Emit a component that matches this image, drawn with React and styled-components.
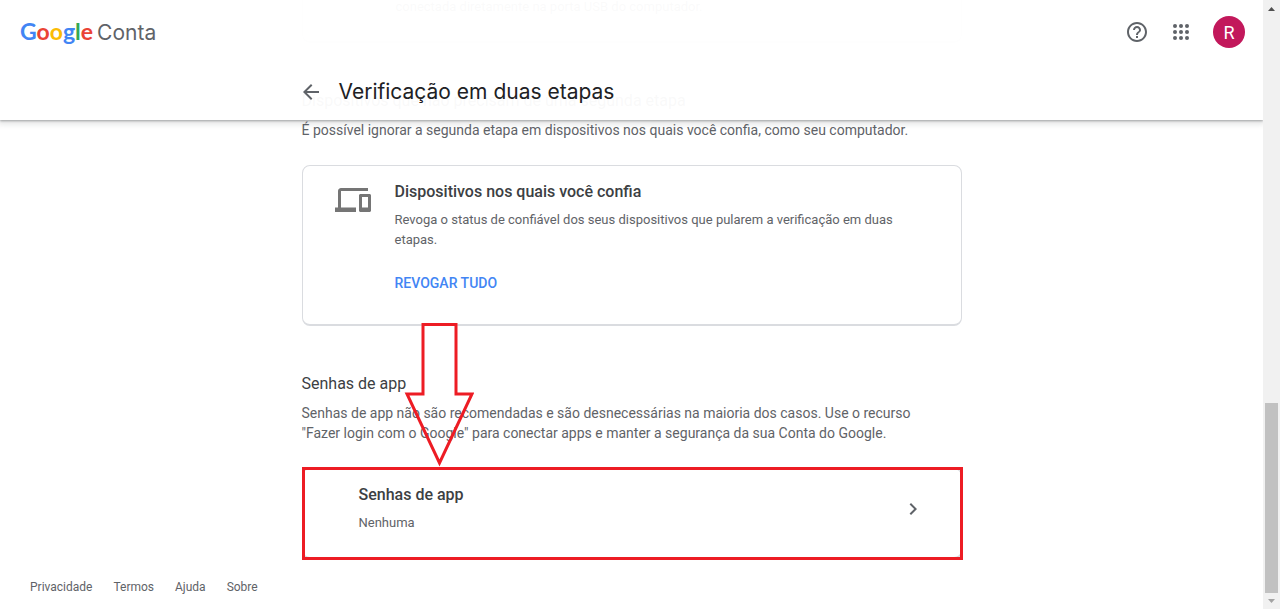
import React from "react";
import styled, { createGlobalStyle } from "styled-components";
import { MdArrowBack, MdChevronRight, MdDevices, MdHelpOutline } from "react-icons/md";

const colors = {
	text: "#3c4043",
	title: "#202124",
	grey: "#5f6368",
	border: "#dadce0",
	link: "#4285f4",
	avatar: "#c2185b",
	red: "#ed1c24",
};

const GlobalStyle = createGlobalStyle`
	* {
		box-sizing: border-box;
	}
	body {
		margin: 0;
		background: #fff;
		font-family: Roboto, "Liberation Sans", sans-serif;
		color: ${colors.text};
	}
`;
const Window = styled.div`
	display: flex;
	height: 100vh;
	overflow: hidden;
`;
const Pane = styled.div`
	position: relative;
	display: flex;
	flex: 1;
	flex-direction: column;
	justify-content: space-between;
	min-width: 0;
	overflow: hidden;
`;
const Column = styled.div`
	width: 100%;
	max-width: 660px;
	margin: 0 auto;
`;
const Header = styled.header`
	position: absolute;
	top: 0;
	left: 0;
	right: 0;
	z-index: 2;
	background: rgba(255, 255, 255, 0.97);
	box-shadow: 0 1px 2px rgba(60, 64, 67, 0.4), 0 2px 6px 2px rgba(60, 64, 67, 0.15);
`;
const TopBar = styled.div`
	display: flex;
	align-items: center;
	justify-content: space-between;
	height: 64px;
	padding: 0 18px 0 20px;
`;
const Brand = styled.a`
	display: flex;
	align-items: baseline;
	gap: 4px;
	color: ${colors.grey};
	font-family: Inter, sans-serif;
	font-size: 21px;
	line-height: 32px;
	text-decoration: none;
`;
const Logo = styled.span`
	font-family: Lato, sans-serif;
	font-size: 23px;
	font-weight: bold;
`;
const Letter = styled.span`
	color: ${(props) => props.color};
`;
const Actions = styled.div`
	display: flex;
	align-items: center;
	gap: 20px;
`;
const IconButton = styled.button`
	display: flex;
	padding: 0;
	border: 0;
	background: none;
	color: ${colors.grey};
	font-size: 24px;
`;
const AppsIcon = styled.svg`
	width: 24px;
	height: 24px;
	fill: currentColor;
`;
const Avatar = styled.button`
	width: 32px;
	height: 32px;
	padding: 0;
	border: 0;
	border-radius: 50%;
	background: ${colors.avatar};
	color: #fff;
	font-family: inherit;
	font-size: 18px;
`;
const TitleBar = styled(Column)`
	display: flex;
	align-items: center;
	gap: 16px;
	height: 56px;
`;
const BackButton = styled(IconButton)`
	margin-left: -3px;
`;
const PageTitle = styled.h1`
	margin: 0;
	color: ${colors.title};
	font-family: Inter, sans-serif;
	font-size: 21px;
	font-weight: normal;
	line-height: 28px;
`;
const SectionTitle = styled.h2`
	margin: 46px 0 7px;
	font-size: 16px;
	font-weight: normal;
	line-height: 24px;
`;
const SectionText = styled.p`
	max-width: 640px;
	margin: 0 0 25px;
	color: ${colors.grey};
	font-size: 14px;
	line-height: 20px;
`;
const Card = styled.section`
	position: relative;
	display: flex;
	gap: 24px;
	padding: 16px 32px 31px;
	border: 1px solid ${colors.border};
	border-bottom-width: 2px;
	border-radius: 8px;
`;
const CardEnd = styled.div`
	height: 43px;
	padding-left: 93px;
	border: solid ${colors.border};
	border-width: 0 1px 2px;
	border-radius: 0 0 8px 8px;
	color: ${colors.grey};
	font-size: 13px;
	line-height: 14px;
`;
const DevicesIcon = styled(MdDevices)`
	flex: none;
	color: #757575;
	font-size: 36px;
`;
const CardTitle = styled.h3`
	margin: 0 0 8px;
	color: ${colors.text};
	font-size: 16px;
	font-weight: 500;
	line-height: 20px;
`;
const CardText = styled.p`
	margin: 0;
	color: ${colors.grey};
	font-size: 13px;
	line-height: 20px;
`;
const TextButton = styled.button`
	margin-top: 23px;
	padding: 0;
	border: 0;
	background: none;
	color: ${colors.link};
	font-family: inherit;
	font-size: 14px;
	font-weight: 500;
	line-height: 20px;
	text-transform: uppercase;
`;
const LinkCard = styled(Card)`
	align-items: center;
	justify-content: space-between;
	padding: 16px 36px 24px 56px;
	color: inherit;
	text-decoration: none;
`;
const Chevron = styled(MdChevronRight)`
	flex: none;
	color: ${colors.grey};
	font-size: 24px;
`;
const Outline = styled.span`
	position: absolute;
	inset: -2px -2px -3px -1px;
	border: 3px solid ${colors.red};
`;
const Arrow = styled.svg`
	position: absolute;
	left: 101px;
	bottom: 100%;
	width: 70px;
	height: 148px;
	fill: none;
	stroke: ${colors.red};
	stroke-width: 3;
`;
const Footer = styled.footer`
	display: flex;
	gap: 21px;
	padding: 0 30px 12px;
`;
const FooterLink = styled.a`
	color: ${colors.grey};
	font-size: 12px;
	line-height: 20px;
	text-decoration: none;
`;
const ScrollTrack = styled.div`
	display: flex;
	flex-direction: column;
	flex: none;
	width: 17px;
	padding: 0 2px;
	background: #f1f1f1;
`;
const ScrollArrow = styled.svg`
	width: 13px;
	height: 16px;
	fill: ${(props) => props.color};
`;
const ScrollSpace = styled.div`
	flex: 387;
`;
const ScrollThumb = styled.div`
	flex: 190;
	background: #c1c1c1;
`;

const App = () => {
	return (
		<Window>
			<GlobalStyle />
			<Pane>
				<Header>
					<TopBar>
						<Brand href="#">
							<Logo>
								<Letter color="#4285f4">G</Letter>
								<Letter color="#ea4335">o</Letter>
								<Letter color="#fbbc04">o</Letter>
								<Letter color="#4285f4">g</Letter>
								<Letter color="#34a853">l</Letter>
								<Letter color="#ea4335">e</Letter>
							</Logo>
							<span>Conta</span>
						</Brand>
						<Actions>
							<IconButton aria-label="Ajuda">
								<MdHelpOutline />
							</IconButton>
							<IconButton aria-label="Google Apps">
								<AppsIcon viewBox="0 0 24 24">
									{[6, 12, 18].map((y) =>
										[6, 12, 18].map((x) => <circle key={`${x}-${y}`} cx={x} cy={y} r="2" />)
									)}
								</AppsIcon>
							</IconButton>
							<Avatar>R</Avatar>
						</Actions>
					</TopBar>
					<TitleBar>
						<BackButton aria-label="Voltar">
							<MdArrowBack />
						</BackButton>
						<PageTitle>Verificação em duas etapas</PageTitle>
					</TitleBar>
				</Header>
				<Column as="main">
					<CardEnd>conectada diretamente na porta USB do computador.</CardEnd>
					<SectionTitle>Dispositivos que não precisam de uma segunda etapa</SectionTitle>
					<SectionText>
						É possível ignorar a segunda etapa em dispositivos nos quais você confia, como seu
						computador.
					</SectionText>
					<Card>
						<DevicesIcon />
						<div>
							<CardTitle>Dispositivos nos quais você confia</CardTitle>
							<CardText>
								Revoga o status de confiável dos seus dispositivos que pularem a verificação em duas
								etapas.
							</CardText>
							<TextButton>Revogar tudo</TextButton>
						</div>
					</Card>
					<SectionTitle>Senhas de app</SectionTitle>
					<SectionText>
						Senhas de app não são recomendadas e são desnecessárias na maioria dos casos. Use o
						recurso "Fazer login com o Google" para conectar apps e manter a segurança da sua Conta do
						Google.
					</SectionText>
					<LinkCard as="a" href="#">
						<div>
							<CardTitle>Senhas de app</CardTitle>
							<CardText>Nenhuma</CardText>
						</div>
						<Chevron />
						<Outline />
						<Arrow viewBox="0 0 70 148">
							<path d="M19 3.5H52V73H68L35.500 142L3 73H19Z" />
						</Arrow>
					</LinkCard>
				</Column>
				<Footer>
					<FooterLink href="#">Privacidade</FooterLink>
					<FooterLink href="#">Termos</FooterLink>
					<FooterLink href="#">Ajuda</FooterLink>
					<FooterLink href="#">Sobre</FooterLink>
				</Footer>
			</Pane>
			<ScrollTrack>
				<ScrollArrow viewBox="0 0 13 16" color="#505050">
					<path d="M3 11L6.5 7L10 11Z" />
				</ScrollArrow>
				<ScrollSpace />
				<ScrollThumb />
				<ScrollArrow viewBox="0 0 13 16" color="#a3a3a3">
					<path d="M3 6L6.5 10L10 6Z" />
				</ScrollArrow>
			</ScrollTrack>
		</Window>
	);
};

export default App;
